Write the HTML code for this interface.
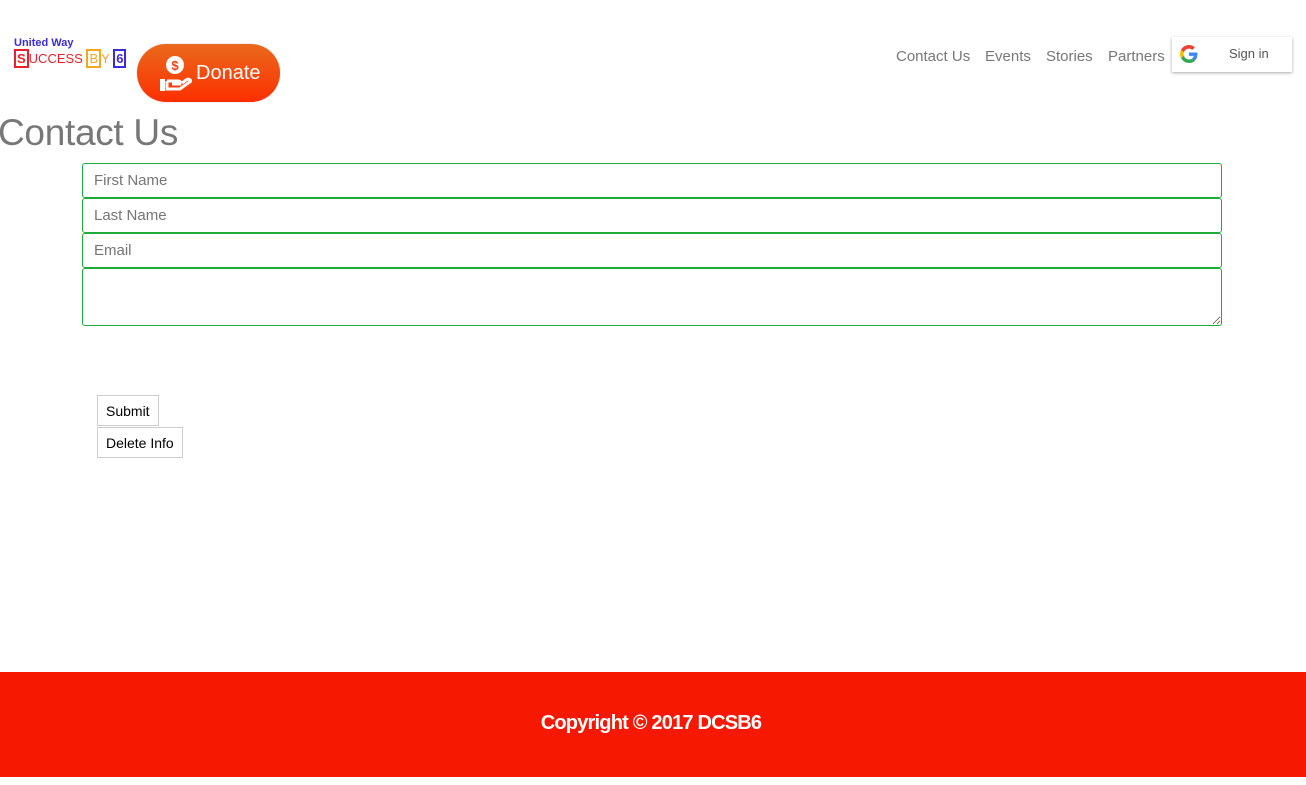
<!DOCTYPE html>
<html><head><meta charset="utf-8"><style>
body{margin:0;width:1306px;height:785px;position:relative;font-family:"Liberation Sans",sans-serif;background:#fff;overflow:hidden}
.abs{position:absolute}
.nav a{position:absolute;top:48px;font-size:15px;color:#777;text-decoration:none}
input,textarea{position:absolute;left:82px;width:1140px;box-sizing:border-box;border:1px solid #1faa3a;border-radius:3px;font-family:"Liberation Sans",sans-serif;font-size:15px;padding:0 11px;color:#777;background:#fff;margin:0}
.btn{position:absolute;left:97px;border:1px solid #ccc;font-size:14px;padding:0 8px;height:31px;line-height:30px;box-sizing:border-box;background:#fff;color:#000}
</style></head><body>
<div class="abs" style="left:14px;top:37px;font-size:11px;font-weight:bold;color:#3a2bdb">United Way</div>
<div class="abs" style="left:14px;top:51px;font-size:13px;height:16px;line-height:16px;white-space:nowrap">
<span style="border:2px solid #e8222a;color:#e8222a;padding:0 1px;font-weight:bold">S</span><span style="color:#e8222a;font-size:13px">UCCESS</span> <span style="border:2px solid #f5a623;color:#f5a623;padding:0 1px">B</span><span style="color:#f5a623">Y</span> <span style="border:2px solid #3a2bdb;color:#3a2bdb;padding:0 1px;font-weight:bold">6</span></div>
<div class="abs" style="left:137px;top:44px;width:143px;height:58px;border-radius:29px;background:linear-gradient(#ea6a1c,#fd2f00);box-shadow:0 0 1px #999"></div>
<svg class="abs" style="left:158px;top:55px" width="34" height="38" viewBox="0 0 34 38"><circle cx="17" cy="10" r="9" fill="#fff"/><text x="17" y="15" text-anchor="middle" font-size="13" font-weight="bold" fill="#f04010" font-family="Liberation Sans">$</text><rect x="2" y="24" width="5" height="12" fill="#fff"/><path d="M9 26 H20 Q23 26 22 29 H14 M9 26 V34 H22 L33 26 Q31 23 28 25 L24 28" stroke="#fff" stroke-width="3" fill="none"/></svg>
<div class="abs" style="left:196px;top:62px;font-size:20px;color:#fff">Donate</div>
<div class="nav"><a style="left:896px">Contact Us</a><a style="left:985px">Events</a><a style="left:1046px">Stories</a><a style="left:1108px">Partners</a></div>
<div class="abs" style="left:1172px;top:37px;width:120px;height:35px;background:#fff;box-shadow:0 1px 3px rgba(0,0,0,.35)"></div>
<svg class="abs" style="left:1180px;top:45px" width="18" height="18" viewBox="0 0 48 48"><path fill="#EA4335" d="M24 9.5c3.5 0 6.6 1.2 9 3.5l6.7-6.7C35.6 2.4 30.2 0 24 0 14.6 0 6.6 5.4 2.7 13.3l7.8 6C12.4 13.7 17.7 9.5 24 9.5z"/><path fill="#4285F4" d="M46.5 24.5c0-1.6-.1-3.1-.4-4.5H24v9h12.7c-.6 3-2.3 5.5-4.8 7.2l7.6 5.9c4.4-4.1 7-10.2 7-17.6z"/><path fill="#FBBC05" d="M10.5 28.7c-.5-1.5-.8-3-.8-4.700s.3-3.2.8-4.7l-7.8-6C1 16.6 0 20.2 0 24s1 7.4 2.7 10.7l7.8-6z"/><path fill="#34A853" d="M24 48c6.5 0 11.9-2.1 15.9-5.8l-7.6-5.9c-2.1 1.4-4.9 2.300-8.3 2.3-6.3 0-11.6-4.2-13.5-9.9l-7.8 6C6.6 42.6 14.6 48 24 48z"/></svg>
<div class="abs" style="left:1229px;top:46px;font-size:13px;color:#555">Sign in</div>
<div class="abs" style="left:-2px;top:112px;font-size:37px;color:#777;letter-spacing:-0.3px">Contact Us</div>
<input style="top:163px;height:35px" placeholder="First Name">
<input style="top:198px;height:35px" placeholder="Last Name">
<input style="top:233px;height:35px" placeholder="Email">
<textarea style="top:268px;height:58px"></textarea>
<div class="btn" style="top:395px">Submit</div>
<div class="btn" style="top:427px">Delete Info</div>
<div class="abs" style="left:0;top:672px;width:1306px;height:105px;background:#f61800"></div>
<div class="abs" style="left:0;top:712px;width:1302px;text-align:center;color:#fff;font-size:20px;font-weight:bold;letter-spacing:-0.8px">Copyright © 2017 DCSB6</div>
</body></html>
